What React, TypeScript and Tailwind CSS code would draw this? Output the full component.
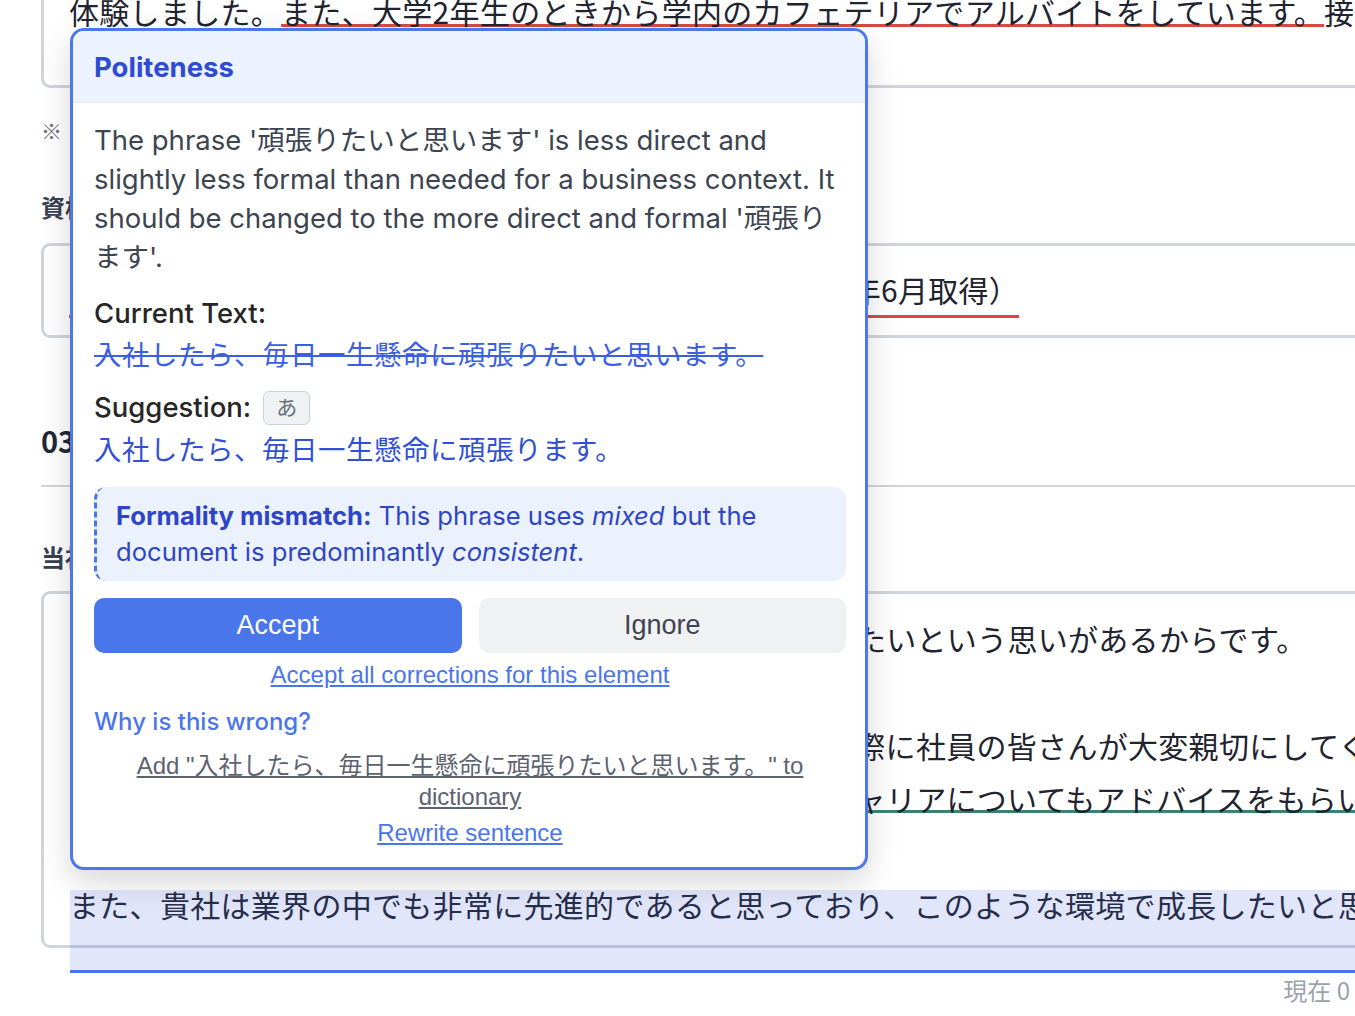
const jp = "font-['Noto_Sans_CJK_JP',sans-serif]";

function Popup() {
  return (
    <div className="absolute left-[70px] top-[28px] w-[798px] overflow-hidden rounded-[14px] border-[3px] border-[#4c77ee] bg-white shadow-[0_12px_32px_rgba(0,0,0,0.16)] font-['Inter','Noto_Sans_CJK_JP',sans-serif]">
      <div className="flex h-[72px] items-center border-b-[1.5px] border-[#e4e8ef] bg-[#ecf3fe] pl-[21px] pt-[2px]">
        <h2 className="text-[27.5px] font-bold text-[#2f4bd4]">Politeness</h2>
      </div>

      <div className="pb-[19px] pl-[21px] pr-[19px] pt-[18px]">
        <p className="text-[27.5px] leading-[39px] text-[#3d4451]">
          The phrase '頑張りたいと思います' is less direct and slightly less formal than needed for a business context. It should be changed to the more direct and formal '頑張ります'.
        </p>

        <div className="mt-[17px] text-[27.5px] font-medium leading-[39px] text-[#262626]">Current Text:</div>
        <div className="mt-[3px] text-[27.5px] leading-[39px] tracking-[0.5px] text-[#3b5ee2] line-through decoration-[2px]">
          入社したら、毎日一生懸命に頑張りたいと思います。
        </div>

        <div className="mt-[13px] flex items-center text-[27.5px] font-medium leading-[39px] text-[#262626]">
          Suggestion:
          <span className="ml-[12px] inline-flex h-[34px] w-[47px] items-center justify-center rounded-[6px] border-[1.5px] border-[#cdd1d8] bg-[#f0f1f3] text-[21px] font-normal text-[#6b7280]">
            あ
          </span>
        </div>
        <div className="mt-[4px] text-[27.5px] leading-[39px] tracking-[0.5px] text-[#3150d4]">
          入社したら、毎日一生懸命に頑張ります。
        </div>

        <div className="mt-[17px] rounded-[12px] border-l-[3px] border-dashed border-[#4a76ec] bg-[#ebf2fd] py-[11px] pl-[19px] pr-[16px] text-[25.6px] leading-[36px] text-[#2e45c6]">
          <span className="font-bold">Formality mismatch:</span> This phrase uses <em>mixed</em> but the document is predominantly <em>consistent</em>.
        </div>

        <div className="mt-[17px] grid h-[55px] grid-cols-2 gap-[17px] font-['Liberation_Sans',sans-serif] text-[27px]">
          <button className="rounded-[10px] bg-[#4a76ec] text-white">Accept</button>
          <button className="rounded-[10px] bg-[#f0f1f3] text-[#3f4450]">Ignore</button>
        </div>

        <div className="mt-[7px] text-center font-['Liberation_Sans','Noto_Sans_CJK_JP',sans-serif] text-[24px] leading-[30px]">
          <a className="text-[#4a76ec] underline">Accept all corrections for this element</a>
        </div>

        <div className="mt-[14px] text-[24px] font-medium leading-[36px] text-[#4a76ec]">Why is this wrong?</div>

        <div className="mt-[10px] px-[40px] text-center font-['Liberation_Sans','Noto_Sans_CJK_JP',sans-serif] text-[24px] leading-[31px]">
          <a className="text-[#5d6270] underline">Add "入社したら、毎日一生懸命に頑張りたいと思います。" to dictionary</a>
        </div>
        <div className="mt-[5px] text-center font-['Liberation_Sans',sans-serif] text-[24px] leading-[31px]">
          <a className="text-[#4a76ec] underline">Rewrite sentence</a>
        </div>
      </div>
    </div>
  );
}

export default function App() {
  return (
    <div className={`relative h-[1016px] w-[1355px] overflow-hidden bg-white text-[#1f2430] ${jp}`}>
      <div className="w-[1600px] pl-[41px]">
        <div className="mt-[-36px] h-[124px] whitespace-nowrap rounded-[9px] border-[3px] border-[#d1d5db] pl-[25px] pt-[18px] text-[30px] leading-[53.3px] tracking-[0.3px]">
          体験しました。
          <span className="underline decoration-[#d9493f] decoration-[3px] underline-offset-[0px] [text-decoration-skip-ink:none]">
            また、大学2年生のときから学内のカフェテリアでアルバイトをしています。
          </span>
          接客を通じて、お客様の立場に立って考える力を身につけました。
        </div>

        <div className="mt-[26px] text-[21px] leading-[32px] text-[#6b7280]">※　文字数は500文字以内で入力してください</div>

        <div className="mt-[43px] text-[24px] font-bold leading-[36px] text-[#374151]">資格・免許</div>
        <div className="mt-[18px] h-[95px] whitespace-nowrap rounded-[9px] border-[3px] border-[#d1d5db] pl-[25px] pt-[17px] text-[30px] leading-[53.3px] tracking-[0.3px]">
          <span className="underline decoration-[#d9493f] decoration-[3px] underline-offset-[13px] [text-decoration-skip-ink:none]">
            普通自動車第一種運転免許、実用英語技能検定1級（2023年6月取得）
          </span>
        </div>

        <div className="mt-[82px] w-[1400px] border-b-2 border-[#d1d5db] pb-[25px] text-[29px] font-bold leading-[40px] text-[#1f2937]">
          03 志望動機
        </div>

        <div className="mt-[52px] text-[24px] font-bold leading-[36px] text-[#374151]">当社を志望する理由</div>
        <div className="mt-[16px] h-[357px] overflow-hidden whitespace-nowrap rounded-[9px] border-[3px] border-[#d1d5db] pl-[25px] pt-[18px] text-[30px] leading-[53.3px] tracking-[0.3px]">
          <div>貴社を志望した理由は、人々の生活を支える仕事に携わりたいという思いがあるからです。</div>
          <div>&nbsp;</div>
          <div>昨年夏、貴社のインターンシップに参加させていただいた際に社員の皆さんが大変親切にしてく</div>
          <div>
            ださり、業務の内容の説明だけでなく、私自身の
            <span className="underline decoration-[#3b8275] decoration-[3px] underline-offset-[-1px] [text-decoration-skip-ink:none]">
              将来のキャリアについてもアドバイスをもらいました。
            </span>
          </div>
          <div>&nbsp;</div>
          <div>また、貴社は業界の中でも非常に先進的であると思っており、このような環境で成長したいと思い</div>
          <div>ました。入社後は一日も早く戦力となれるよう努力してまいります。</div>
        </div>
      </div>

      <div className="mt-[27px] pr-[5px] text-right text-[24px] leading-[30px] text-[#9ca3af]">現在 0</div>

      <div className="pointer-events-none absolute left-[70px] right-0 top-[890px] h-[83px] border-b-[3px] border-[#4a76ec] bg-[rgba(70,100,225,0.16)]" />

      <Popup />
    </div>
  );
}
